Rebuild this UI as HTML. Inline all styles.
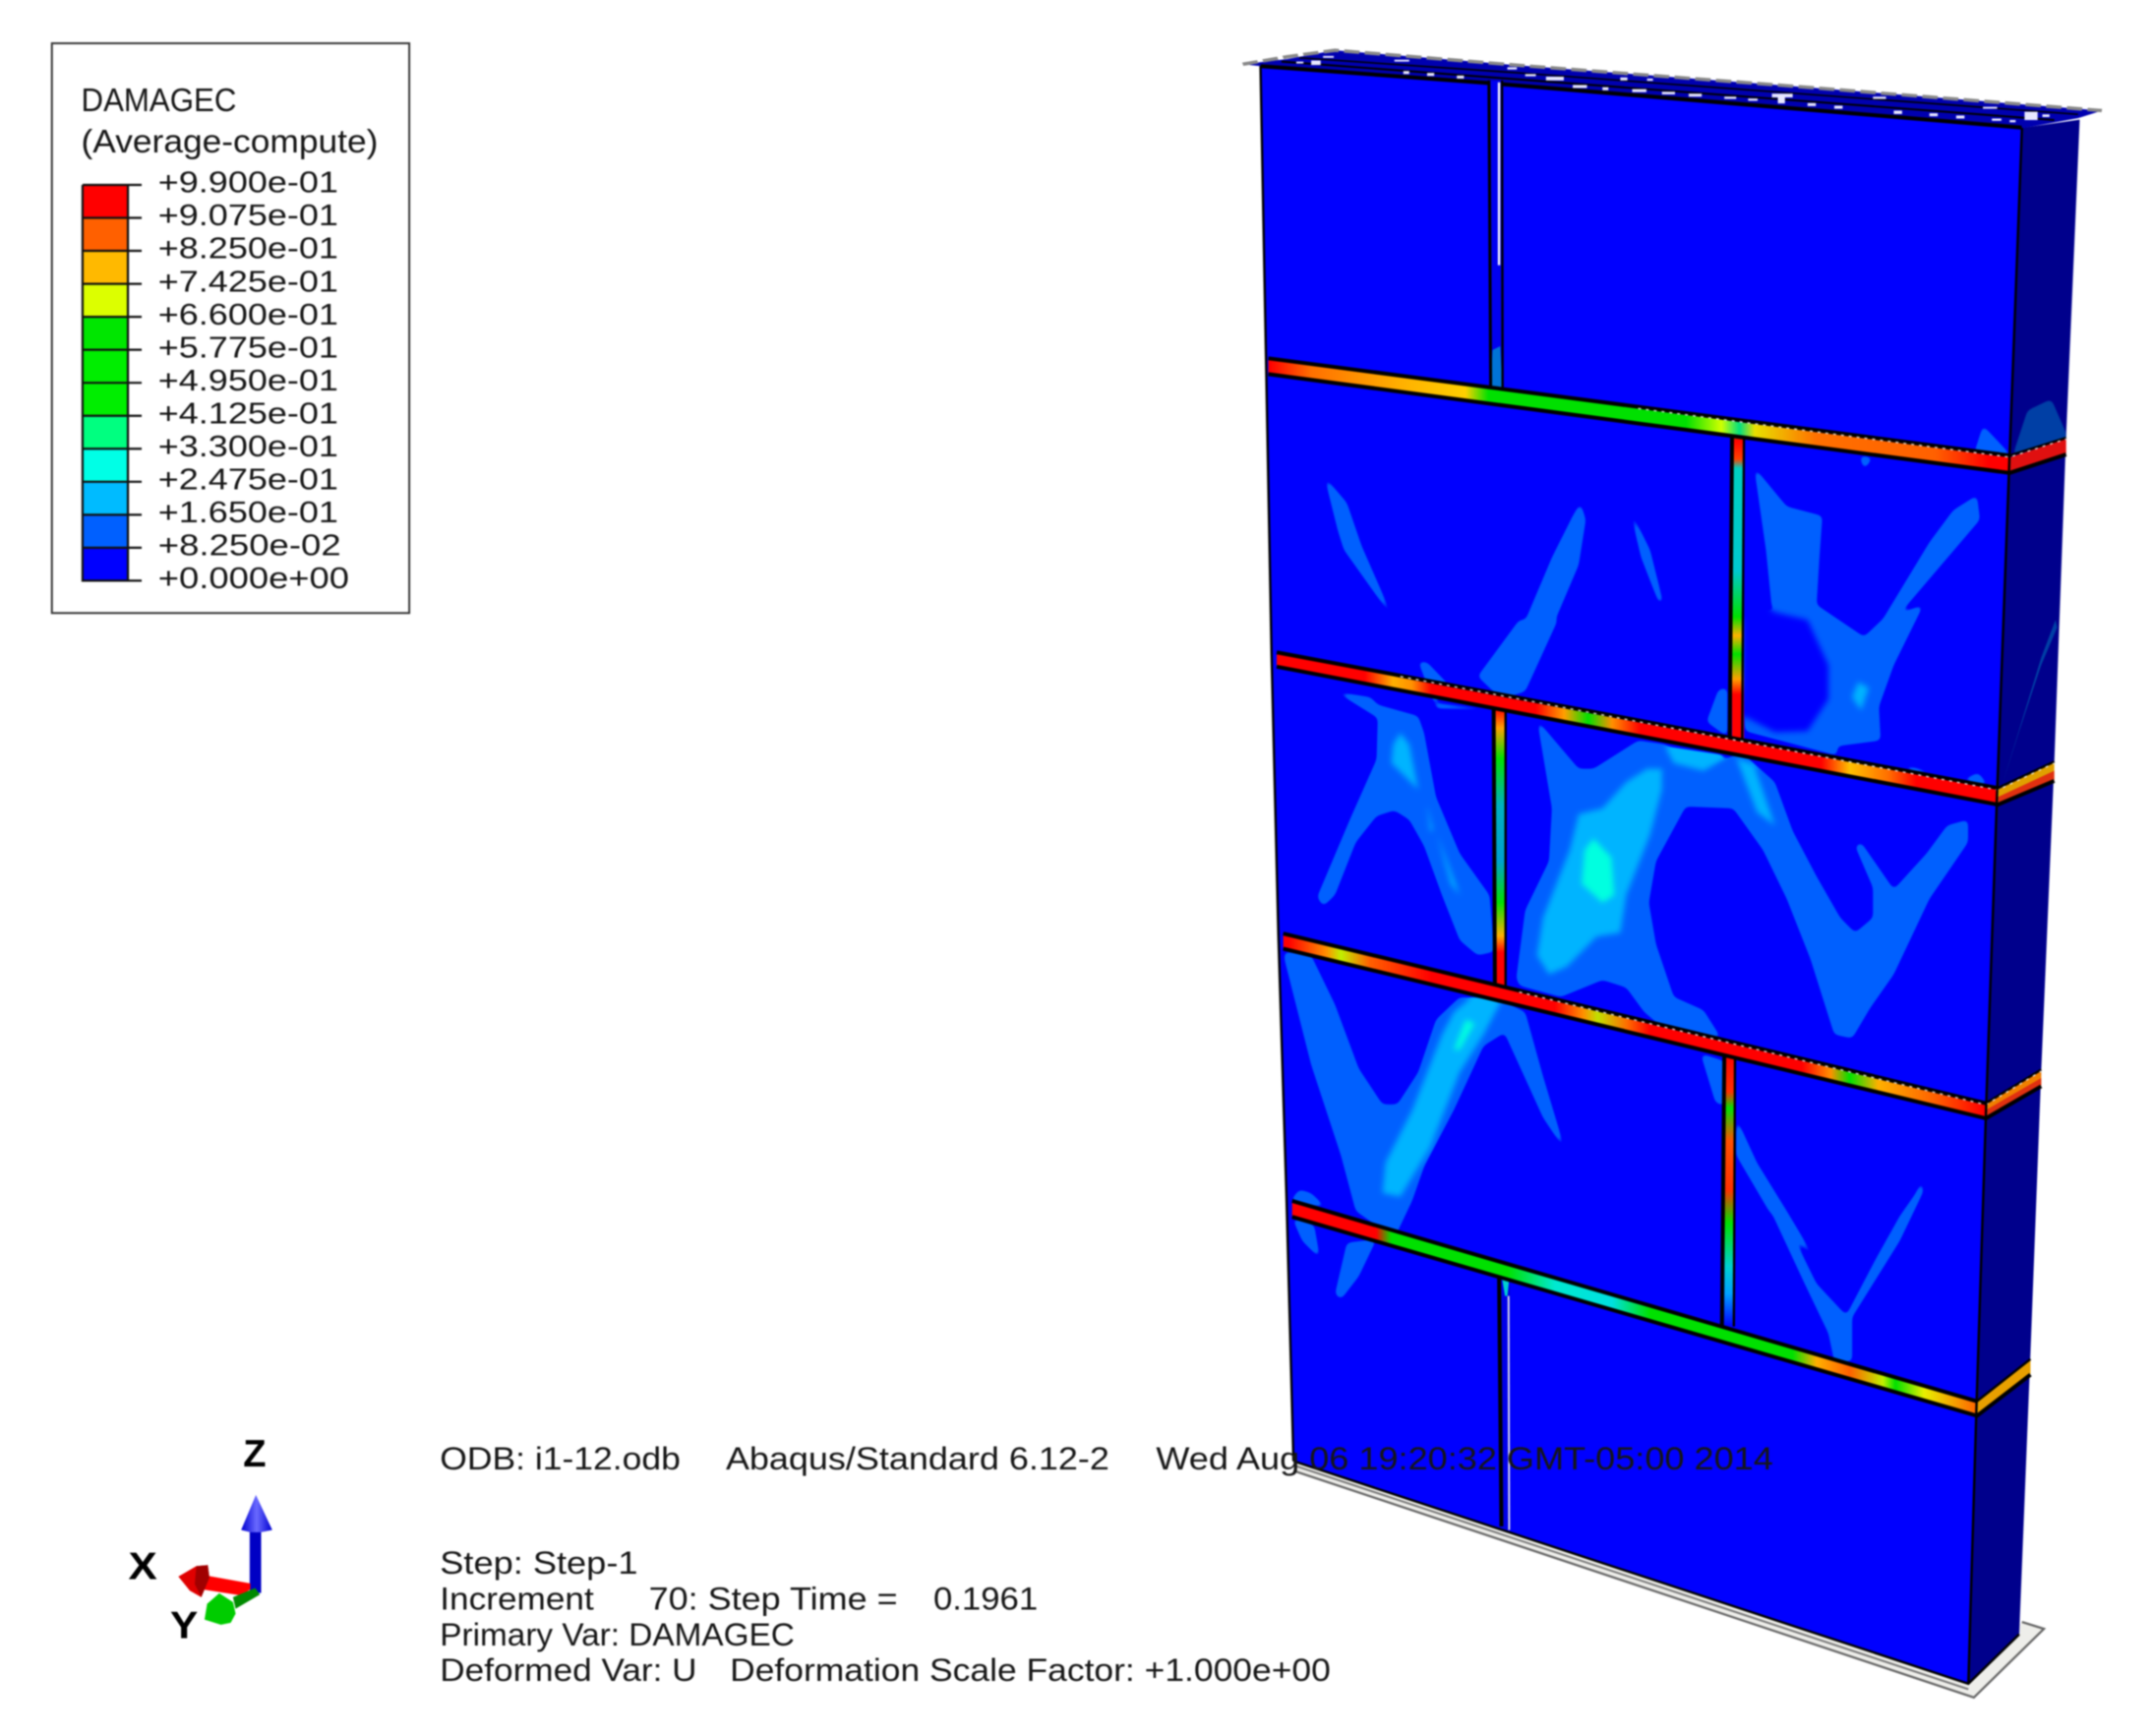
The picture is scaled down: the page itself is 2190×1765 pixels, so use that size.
<!DOCTYPE html>
<html><head><meta charset="utf-8"><style>
html,body{margin:0;padding:0;background:#fff;width:2190px;height:1765px;overflow:hidden}
svg{display:block;filter:blur(.7px)}
text{font-family:"Liberation Sans",sans-serif;fill:#161616;font-size:22px}
.x text{font-size:23px}
.k{fill:none;stroke:#000;stroke-width:4;vector-effect:non-scaling-stroke}
.t{fill:none;stroke:#000;stroke-width:2.4;vector-effect:non-scaling-stroke}
.d{fill:none;stroke:#fff;stroke-width:1.3;stroke-dasharray:3 5;opacity:.85;vector-effect:non-scaling-stroke}
.l{fill:#0060ff}.m{fill:#00b4ff}.c{fill:#00ffe0}.b{fill:#0000ff}
</style></head><body>
<svg width="2190" height="1765" viewBox="2 0 1563 1263" xmlns="http://www.w3.org/2000/svg">
<defs>
<filter id="sm" x="900" y="250" width="620" height="750" filterUnits="userSpaceOnUse" color-interpolation-filters="sRGB"><feGaussianBlur stdDeviation="2"/><feComponentTransfer><feFuncA type="linear" slope="5" intercept="-2"/></feComponentTransfer></filter>
<linearGradient id="b1" gradientUnits="userSpaceOnUse" x1="0" x2="1600" y1="0" y2="0">
<stop offset="5%" stop-color="#f00"/><stop offset="9.4%" stop-color="#ff7000"/><stop offset="18.8%" stop-color="#ffb000"/><stop offset="25.6%" stop-color="#ffd000"/><stop offset="28%" stop-color="#00e000"/><stop offset="48.8%" stop-color="#00e000"/><stop offset="52.5%" stop-color="#d0ff00"/><stop offset="54.4%" stop-color="#00e080"/><stop offset="56%" stop-color="#e8e000"/><stop offset="62.5%" stop-color="#ff7000"/><stop offset="75%" stop-color="#ff6000"/><stop offset="80.6%" stop-color="#f00"/></linearGradient>
<linearGradient id="b2" gradientUnits="userSpaceOnUse" x1="0" x2="1600" y1="0" y2="0">
<stop offset="15%" stop-color="#f00"/><stop offset="18%" stop-color="#ffb000"/><stop offset="20%" stop-color="#ff9000"/><stop offset="22%" stop-color="#f00"/><stop offset="33%" stop-color="#f00"/><stop offset="36%" stop-color="#ffa000"/><stop offset="38.5%" stop-color="#00e000"/><stop offset="41%" stop-color="#ff9000"/><stop offset="44%" stop-color="#f00"/><stop offset="63%" stop-color="#f00"/><stop offset="66%" stop-color="#ffc000"/><stop offset="70%" stop-color="#ff7000"/><stop offset="73%" stop-color="#f00"/></linearGradient>
<linearGradient id="b3" gradientUnits="userSpaceOnUse" x1="0" x2="1600" y1="0" y2="0">
<stop offset="7%" stop-color="#f00"/><stop offset="11%" stop-color="#ff9000"/><stop offset="12.5%" stop-color="#c0f000"/><stop offset="15.5%" stop-color="#ff6000"/><stop offset="22%" stop-color="#f00"/><stop offset="35%" stop-color="#f00"/><stop offset="38%" stop-color="#ff9000"/><stop offset="39.5%" stop-color="#c0e000"/><stop offset="42.5%" stop-color="#ff7000"/><stop offset="45%" stop-color="#f00"/><stop offset="61%" stop-color="#f00"/><stop offset="64%" stop-color="#ff9000"/><stop offset="66%" stop-color="#00e000"/><stop offset="69%" stop-color="#ffb000"/><stop offset="75%" stop-color="#ff6000"/><stop offset="80%" stop-color="#f00"/></linearGradient>
<linearGradient id="b4" gradientUnits="userSpaceOnUse" x1="0" x2="1600" y1="0" y2="0">
<stop offset="16.2%" stop-color="#f00"/><stop offset="17.8%" stop-color="#00e000"/><stop offset="30%" stop-color="#00e000"/><stop offset="35%" stop-color="#00e8d0"/><stop offset="41%" stop-color="#00e0e0"/><stop offset="45%" stop-color="#00e000"/><stop offset="60%" stop-color="#00e000"/><stop offset="62.5%" stop-color="#ffb000"/><stop offset="66%" stop-color="#ff6000"/><stop offset="69.5%" stop-color="#c0f000"/><stop offset="70.8%" stop-color="#00e000"/><stop offset="73.8%" stop-color="#e8f000"/><stop offset="79.5%" stop-color="#ff6000"/></linearGradient>
<linearGradient id="v2" x1="0" x2="0" y1="0" y2="1">
<stop offset="0" stop-color="#00e000"/><stop offset=".03" stop-color="#f00"/><stop offset=".09" stop-color="#ff4000"/><stop offset=".12" stop-color="#00d0c0"/><stop offset=".45" stop-color="#00c8d0"/><stop offset=".6" stop-color="#00e000"/><stop offset=".66" stop-color="#ffb000"/><stop offset=".72" stop-color="#00e000"/><stop offset=".8" stop-color="#ffa000"/><stop offset=".85" stop-color="#f00"/><stop offset="1" stop-color="#f00"/></linearGradient>
<linearGradient id="v3" x1="0" x2="0" y1="0" y2="1">
<stop offset="0" stop-color="#f00"/><stop offset=".07" stop-color="#ffa000"/><stop offset=".18" stop-color="#00e000"/><stop offset=".35" stop-color="#00b0c0"/><stop offset=".55" stop-color="#00a0d0"/><stop offset=".7" stop-color="#00e000"/><stop offset=".82" stop-color="#ffb000"/><stop offset=".88" stop-color="#f00"/><stop offset="1" stop-color="#f00"/></linearGradient>
<linearGradient id="v4" x1="0" x2="0" y1="0" y2="1">
<stop offset="0" stop-color="#f00"/><stop offset=".14" stop-color="#ff3000"/><stop offset=".2" stop-color="#00e000"/><stop offset=".32" stop-color="#ff5000"/><stop offset=".5" stop-color="#ff3000"/><stop offset=".62" stop-color="#00e000"/><stop offset=".78" stop-color="#00d0d0"/><stop offset=".88" stop-color="#00a0ff"/><stop offset="1" stop-color="#0000ff"/></linearGradient>
<linearGradient id="bh" x1="0" x2="1" y1="0" y2="0"><stop offset="0" stop-color="#0000d0"/><stop offset=".5" stop-color="#6a6aff"/><stop offset="1" stop-color="#0000d0"/></linearGradient>
</defs>

<!-- base plate -->
<polygon points="941,1063 1432,1225 1471,1180 1487,1185 1436,1235 941,1071" fill="#eeeeea"/>
<polyline points="941,1070 1436,1235 1487,1185 1471,1180" fill="none" stroke="#666" stroke-width="1.6"/>
<polyline points="941,1066 1432,1229" fill="none" stroke="#777" stroke-width="1.4"/>

<!-- side -->
<polygon points="1471,93 1513,87 1503,320 1494.5,555 1485,779 1477,989 1469,1189 1432,1225 1438,1020 1445,803 1453,574 1462,331" fill="#00008c"/>
<!-- front -->
<polygon points="917,48 1471,93 1462,331 1453,574 1445,803 1438,1020 1432,1225 941,1063 936,874 930,680 925,475 921,261" fill="#0000ff"/>

<!-- cap -->
<g transform="matrix(.4325 0 0 .2743 889 21.5)">
<polygon points="35,92 110,78 190,55 500,95 1000,155 1480,215 1440,235 1345,262 470,145 65,97" fill="#0000b0"/>
<polyline points="35,92 110,72 190,55 500,95 1000,155 1480,215" fill="none" stroke="#888" stroke-width="9" stroke-dasharray="26 9"/>
<polyline points="65,97 450,142 1345,260" class="k"/>
<polyline points="100,85 480,130 1400,240" fill="none" stroke="#000" stroke-width="5"/>
<polyline points="130,75 500,115 1440,225" fill="none" stroke="#000" stroke-width="4"/>
<g fill="#e8e8ff">
<rect x="125" y="85" width="12" height="5"/><rect x="150" y="82" width="16" height="12"/><rect x="290" y="80" width="25" height="5"/><rect x="305" y="110" width="10" height="8"/><rect x="345" y="115" width="12" height="8"/><rect x="395" y="122" width="12" height="8"/><rect x="170" y="70" width="18" height="5"/><rect x="480" y="100" width="16" height="6"/><rect x="510" y="118" width="18" height="6"/><rect x="545" y="125" width="30" height="10"/><rect x="590" y="147" width="24" height="8"/><rect x="640" y="153" width="10" height="8"/><rect x="670" y="127" width="12" height="8"/><rect x="690" y="158" width="24" height="8"/><rect x="715" y="130" width="10" height="6"/><rect x="740" y="165" width="22" height="7"/><rect x="785" y="170" width="22" height="8"/><rect x="845" y="178" width="20" height="6"/><rect x="885" y="183" width="16" height="6"/><rect x="925" y="170" width="35" height="10"/><rect x="935" y="178" width="12" height="18"/><rect x="985" y="195" width="14" height="8"/><rect x="1030" y="202" width="14" height="8"/><rect x="1095" y="178" width="22" height="6"/><rect x="1130" y="215" width="14" height="9"/><rect x="1190" y="222" width="14" height="8"/><rect x="1235" y="228" width="14" height="8"/><rect x="1280" y="205" width="24" height="5"/><rect x="1295" y="236" width="16" height="6"/><rect x="1350" y="218" width="22" height="22"/><rect x="1380" y="225" width="12" height="7"/><rect x="1325" y="240" width="10" height="6"/>
</g>
</g>

<g filter="url(#sm)">
<!-- contours: course 2 -->
<g transform="matrix(.4325 0 0 .2743 889 21.5)">
<polygon class="l" points="172,1185 210,1255 235,1370 290,1568 205,1380 195,1330"/>
<polygon class="l" points="603,1255 612,1300 600,1420 560,1568 510,1568 555,1400 590,1290"/>
<polygon class="l" points="685,1268 720,1380 742,1518 735,1522 705,1400"/>
<polygon class="l" points="895,1160 950,1265 1010,1290 1005,1400 1000,1530 925,1535 915,1380"/>
<polygon class="l" points="1270,1235 1275,1300 1210,1420 1130,1568 1110,1568 1190,1360 1230,1275"/>
<polygon class="l" points="1265,1125 1280,1050 1328,1130"/>
<polygon class="l" points="1072,1130 1095,1135 1080,1168"/>
<polygon fill="#003fa5" points="1330,1130 1355,1010 1395,980 1420,1070 1420,1090"/>
</g>
<g transform="matrix(.4325 0 0 .2743 889 451)">
<polygon class="l" points="1000,-40 1080,45 1110,0 1180,-40 1130,120 1105,230 1108,320 1035,335 1035,360 880,295 870,0 960,-40" />
<polygon class="b" points="875,-40 985,0 1020,120 1020,210 985,295 930,298 878,255"/>
<polygon class="m" points="1070,165 1088,180 1075,240 1060,205"/>
<polygon class="l" points="330,110 345,112 380,170 358,220 450,235 430,240 360,235"/>
<polygon class="l" points="430,150 500,0 565,0 510,190 470,210"/>
<polygon class="l" points="815,270 835,185 850,180 850,310"/>
<polygon class="l" points="1145,385 1175,395 1200,410 1160,405"/>
<polygon class="l" points="1245,425 1272,405 1290,440"/>

<!-- course 3 left -->
<polygon class="l" points="150,150 190,190 250,205 262,225 330,255 340,300 360,470 400,620 450,730 458,880 430,890 400,850 370,730 340,600 315,530 290,505 260,520 225,590 190,730 170,760 160,735 215,530 260,370 262,260"/>
<polygon class="m" points="300,300 315,330 330,450 285,380 288,330"/>
<polygon class="m" points="345,490 355,560 350,560"/><polygon class="m" points="362,570 400,730 385,700"/>

<!-- course 3 right -->
<polygon class="l" points="530,265 600,395 625,395 700,320 745,330 810,400 860,360 880,360 930,430 960,560 1000,680 1040,790 1065,830 1095,790 1095,710 1065,600 1075,590 1130,715 1185,620 1220,545 1255,530 1255,590 1190,740 1130,940 1090,1030 1060,1110 1030,1100 1010,1000 990,900 950,740 910,610 860,500 780,495 730,640 718,750 730,860 760,1000 810,1035 840,1110 740,1080 710,1040 680,975 640,955 570,1000 500,970 495,950 510,770 550,640 555,500"/>
<polygon class="m" points="740,395 715,395 680,430 640,500 600,515 585,610 540,790 530,890 550,940 580,920 630,840 670,830 680,730 720,570 740,450"/>
<polygon class="m" points="745,335 850,360 810,400 760,380"/>
<polygon class="m" points="865,365 895,385 930,545 900,510"/>
<polygon class="c" points="625,580 655,630 660,730 640,750 605,700 610,610"/>

<!-- course 4 left -->
<polygon class="l" points="105,880 150,890 190,1020 230,1190 270,1285 295,1285 330,1200 360,1060 400,1000 470,1010 510,1040 540,1210 578,1410 540,1320 475,1095 440,1130 390,1300 340,1450 320,1540 290,1640 225,1568 200,1420 150,1180 105,900"/>
<polygon class="m" points="420,1000 470,1010 440,1100 400,1200 350,1400 300,1530 270,1520 275,1440 320,1300 370,1100 390,1040"/>
<polygon class="c" points="410,1060 425,1070 400,1140 390,1140"/>

<!-- course 4 right of joint -->
<polygon class="l" points="805,1150 845,1170 845,1290 830,1280"/>
<polygon class="l" points="865,1320 900,1440 950,1568 1000,1700 920,1568 865,1420"/>
</g>
<g transform="matrix(.4325 0 0 .258 889 859)">
<polygon class="l" points="915,0 1000,290 1050,380 1100,220 1140,100 1165,40 1178,0 1180,30 1140,170 1060,385 1060,510 1030,510 1020,430 980,290 905,20"/>
<polygon class="l" points="118,50 130,25 150,35 175,75 118,60"/>
<polygon class="l" points="118,105 155,125 165,220 135,170"/>
<polygon class="l" points="210,175 260,165 230,270 200,335 190,320"/>
</g>
</g>
<g transform="matrix(.4325 0 0 .2743 889 451)">
<polygon fill="#003fa5" points="1312,440 1378,100 1402,0 1405,20 1378,120 1340,300"/>
</g>

<!-- vertical joints -->
<g transform="matrix(.4325 0 0 .2743 889 21.5)">
<rect x="449" y="135" width="21" height="825" fill="#0000f0"/>
<line x1="466" y1="140" x2="466" y2="625" stroke="#f4f4ff" stroke-width="4"/>
<polygon points="455,850 468,840 472,960 452,960" fill="#0090d0" opacity=".8"/>
<line x1="449" y1="135" x2="452" y2="960" class="k" style="stroke-width:3"/>
<line x1="471" y1="135" x2="472" y2="960" class="t"/>
<rect x="858" y="1065" width="20" height="822" fill="url(#v2)"/>
<line x1="858" y1="1075" x2="854" y2="1887" class="k"/>
<line x1="878" y1="1085" x2="875" y2="1887" class="t"/>
</g>
<g transform="matrix(.4325 0 0 .2743 889 451)">
<rect x="457" y="235" width="20" height="735" fill="url(#v3)"/>
<line x1="457" y1="235" x2="459" y2="970" class="k"/>
<line x1="477" y1="240" x2="477" y2="975" class="t"/>
<rect x="845" y="1150" width="18" height="724" fill="url(#v4)"/>
<line x1="845" y1="1150" x2="841" y2="1874" class="k"/>
<line x1="863" y1="1155" x2="861" y2="1874" class="t"/>
</g>
<g transform="matrix(.4325 0 0 .258 889 859)">
<rect x="466" y="265" width="19" height="720" fill="#0000e8"/>
<polygon points="470,265 484,265 480,325 476,325" fill="#00d0d0"/>
<line x1="482" y1="325" x2="483" y2="985" stroke="#e8e8e8" stroke-width="3"/>
<line x1="466" y1="265" x2="470" y2="975" class="k"/>
</g>

<!-- bands -->
<g transform="matrix(.4325 0 0 .2743 889 21.5)">
<polygon points="78,875 1325,1135 1325,1172 78,912" fill="url(#b1)"/>
<polygon points="1325,1135 1420,1085 1420,1125 1325,1172" fill="#e01010"/>
<polyline points="78,872 1325,1130" class="k"/><polyline points="78,914 1325,1176 1420,1127" class="k"/>
<polyline points="1325,1130 1420,1083" class="t"/>
<polyline points="700,1005 1325,1134 1420,1086" class="d"/>
</g>
<g transform="matrix(.4325 0 0 .2743 889 451)">
<polygon points="92,88 1305,450 1305,488 92,122" fill="url(#b2)"/>
<polygon points="1305,450 1400,378 1400,425 1305,488" fill="#e0a000"/>
<polygon points="1305,470 1400,400 1400,425 1305,488" fill="#e03010"/>
<polyline points="92,86 1305,446" class="k"/><polyline points="92,124 1305,490 1400,427" class="k"/>
<polyline points="1305,446 1400,376" class="t"/>
<polyline points="300,150 1305,451 1400,380" class="d"/>
<polygon points="103,835 1285,1285 1285,1320 103,870" fill="url(#b3)"/>
<polygon points="1285,1285 1378,1195 1378,1235 1285,1320" fill="#f08000"/>
<polygon points="1285,1300 1378,1215 1378,1235 1285,1320" fill="#e03010"/>
<polyline points="103,832 1285,1282" class="k"/><polyline points="103,872 1285,1322 1378,1237" class="k"/>
<polyline points="1285,1282 1378,1193" class="t"/>
<polyline points="500,987 1285,1286 1378,1197" class="d"/>
</g>
<g transform="matrix(.4325 0 0 .258 889 859)">
<polygon points="118,60 1270,625 1270,660 118,100" fill="url(#b4)"/>
<polygon points="1270,625 1360,505 1360,545 1270,660" fill="#e8a000"/>
<polyline points="118,57 1270,622" class="k"/><polyline points="118,102 1270,663 1360,547" class="k"/>
<polyline points="1270,622 1360,503" class="t"/>
</g>

<!-- edges -->
<polyline points="917,48 921,261 925,475 930,680 936,874 941,1063" class="t"/>
<polyline points="1471,93 1462,331 1453,574 1445,803 1438,1020 1432,1225" class="t"/>
<polyline points="941,1063 1432,1225 1469,1189" class="t"/>

<!-- legend -->
<rect x="37.7" y="31.5" width="260" height="414.5" fill="#fff" stroke="#333" stroke-width="1.4"/>
<text x="59" y="81" textLength="113" lengthAdjust="spacingAndGlyphs" style="font-size:24px">DAMAGEC</text>
<text x="59" y="111" textLength="216" lengthAdjust="spacingAndGlyphs" style="font-size:24px">(Average-compute)</text>
<g>
<rect x="60" y="134.5" width="33" height="24" fill="#ff0000"/>
<rect x="60" y="158.5" width="33" height="24" fill="#ff6000"/>
<rect x="60" y="182.5" width="33" height="24" fill="#ffb900"/>
<rect x="60" y="206.5" width="33" height="24" fill="#dcff00"/>
<rect x="60" y="230.5" width="33" height="24" fill="#00e600"/>
<rect x="60" y="254.5" width="33" height="24" fill="#00ee00"/>
<rect x="60" y="278.5" width="33" height="24" fill="#00ee00"/>
<rect x="60" y="302.5" width="33" height="24" fill="#00ff80"/>
<rect x="60" y="326.5" width="33" height="24" fill="#00ffe6"/>
<rect x="60" y="350.5" width="33" height="24" fill="#00bbff"/>
<rect x="60" y="374.5" width="33" height="24" fill="#0060ff"/>
<rect x="60" y="398.5" width="33" height="24" fill="#0000ff"/>
<path d="M60 134.5V422.5H93V134.5M60 134.5H103M60 158.5H103M60 182.5H103M60 206.5H103M60 230.5H103M60 254.5H103M60 278.5H103M60 302.5H103M60 326.5H103M60 350.5H103M60 374.5H103M60 398.5H103M60 422.5H103" fill="none" stroke="#111" stroke-width="1.6"/>
</g>
<g>
<text x="115" y="140" textLength="131" lengthAdjust="spacingAndGlyphs">+9.900e-01</text>
<text x="115" y="164" textLength="131" lengthAdjust="spacingAndGlyphs">+9.075e-01</text>
<text x="115" y="188" textLength="131" lengthAdjust="spacingAndGlyphs">+8.250e-01</text>
<text x="115" y="212" textLength="131" lengthAdjust="spacingAndGlyphs">+7.425e-01</text>
<text x="115" y="236" textLength="131" lengthAdjust="spacingAndGlyphs">+6.600e-01</text>
<text x="115" y="260" textLength="131" lengthAdjust="spacingAndGlyphs">+5.775e-01</text>
<text x="115" y="284" textLength="131" lengthAdjust="spacingAndGlyphs">+4.950e-01</text>
<text x="115" y="308" textLength="131" lengthAdjust="spacingAndGlyphs">+4.125e-01</text>
<text x="115" y="332" textLength="131" lengthAdjust="spacingAndGlyphs">+3.300e-01</text>
<text x="115" y="356" textLength="131" lengthAdjust="spacingAndGlyphs">+2.475e-01</text>
<text x="115" y="380" textLength="131" lengthAdjust="spacingAndGlyphs">+1.650e-01</text>
<text x="115" y="404" textLength="133" lengthAdjust="spacingAndGlyphs">+8.250e-02</text>
<text x="115" y="428" textLength="139" lengthAdjust="spacingAndGlyphs">+0.000e+00</text>
</g>

<!-- triad -->
<g transform="matrix(.238 0 0 .2386 71.4 1030.8)">
<text x="443" y="152" textLength="70" lengthAdjust="spacingAndGlyphs" style="font-size:118px;font-weight:bold;fill:#000">Z</text>
<text x="92" y="495" textLength="88" lengthAdjust="spacingAndGlyphs" style="font-size:118px;font-weight:bold;fill:#000">X</text>
<text x="220" y="675" textLength="85" lengthAdjust="spacingAndGlyphs" style="font-size:118px;font-weight:bold;fill:#000">Y</text>
<rect x="463" y="345" width="35" height="192" fill="#0000c4"/>
<polygon points="482,238 532,345 497,352 465,352 437,345" fill="url(#bh)"/>
<polygon points="320,482 465,508 465,525 440,545 310,525" fill="#ff0000"/>
<polygon points="245,487 300,455 335,452 340,490 315,550 280,530" fill="#e00000"/>
<polygon points="300,455 335,452 340,490 315,550 295,510" fill="#a00000"/>
<polygon points="412,550 480,522 494,542 420,585" fill="#008a00"/>
<polygon points="333,570 370,538 412,565 420,600 405,628 375,634 325,618" fill="#00cc00"/>
</g>

<!-- annotation text -->
<g class="x">
<text x="320" y="1069" textLength="175" lengthAdjust="spacingAndGlyphs">ODB: i1-12.odb</text>
<text x="528" y="1069" textLength="279" lengthAdjust="spacingAndGlyphs">Abaqus/Standard 6.12-2</text>
<text x="841" y="1069" textLength="449" lengthAdjust="spacingAndGlyphs">Wed Aug 06 19:20:32 GMT-05:00 2014</text>
<text x="320" y="1145" textLength="144" lengthAdjust="spacingAndGlyphs">Step: Step-1</text>
<text x="320" y="1171" textLength="112" lengthAdjust="spacingAndGlyphs">Increment</text>
<text x="472" y="1171" textLength="181" lengthAdjust="spacingAndGlyphs">70: Step Time =</text>
<text x="679" y="1171" textLength="76" lengthAdjust="spacingAndGlyphs">0.1961</text>
<text x="320" y="1197" textLength="258" lengthAdjust="spacingAndGlyphs">Primary Var: DAMAGEC</text>
<text x="320" y="1223" textLength="187" lengthAdjust="spacingAndGlyphs">Deformed Var: U</text>
<text x="531" y="1223" textLength="437" lengthAdjust="spacingAndGlyphs">Deformation Scale Factor: +1.000e+00</text>
</g>
</svg>
</body></html>
